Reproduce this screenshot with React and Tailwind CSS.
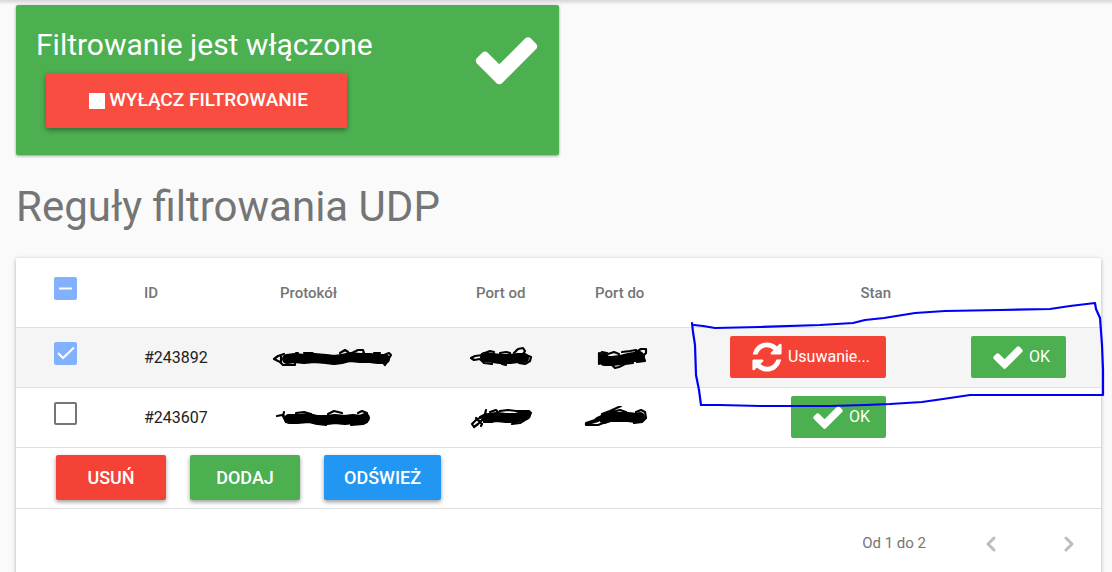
import React, { useState } from 'react';
import { clsx } from 'clsx';
import { ChevronLeft, ChevronRight } from 'lucide-react';

const CheckIcon = ({ className }) => (
  <svg viewBox="0 0 1792 1792" fill="currentColor" aria-hidden="true" className={className}>
    <path d="M1671 566q0 40-28 68l-724 724-136 136q-28 28-68 28t-68-28l-136-136-362-362q-28-28-28-68t28-68l136-136q28-28 68-28t68 28l294 295 656-657q28-28 68-28t68 28l136 136q28 28 28 68z" />
  </svg>
);

const RefreshIcon = ({ className }) => (
  <svg viewBox="0 0 1792 1792" fill="currentColor" aria-hidden="true" className={className}>
    <path d="M1639 1056q0 5-1 7-64 268-268 434.5t-478 166.5q-146 0-282.5-55t-243.5-157l-129 129q-19 19-45 19t-45-19-19-45v-448q0-26 19-45t45-19h448q26 0 45 19t19 45-19 45l-137 137q71 66 161 102t187 36q134 0 250-65t186-179q11-17 53-117 8-23 30-23h192q13 0 22.5 9.5t9.5 22.5zm25-800v448q0 26-19 45t-45 19h-448q-26 0-45-19t-19-45 19-45l138-138q-148-137-349-137-134 0-250 65t-186 179q-11 17-53 117-8 23-30 23h-199q-13 0-22.5-9.5t-9.5-22.5v-7q65-268 270-434.5t480-166.5q146 0 284 55.5t245 156.5l130-129q19-19 45-19t45 19 19 45z" />
  </svg>
);

// Pen strokes that hide the private values: thick = body, thin = loose ends
const Scribble = ({ viewBox, thick, thin, className }) => (
  <svg
    viewBox={viewBox}
    fill="none"
    stroke="#000"
    strokeLinecap="round"
    strokeLinejoin="round"
    aria-hidden="true"
    className={clsx('-ml-3 block h-6 max-w-none', className)}
  >
    <path d={thick} strokeWidth="10" />
    <path d={thin} strokeWidth="2.2" />
  </svg>
);

const Checkbox = ({ label, checked, indeterminate, onChange }) => (
  <label className="relative block h-[23px] w-[23px]">
    <input
      type="checkbox"
      aria-label={label}
      checked={checked}
      onChange={onChange}
      className="block h-full w-full appearance-none rounded-xs border-2 border-[#757575] checked:border-[#82b1ff] checked:bg-[#82b1ff]"
    />
    {checked && (
      <svg viewBox="0 0 23 23" fill="none" stroke="#fff" strokeWidth="2" className="pointer-events-none absolute inset-0">
        <path d={indeterminate ? 'M5 11.5h13' : 'M4 11l5 5L20 5.500'} />
      </svg>
    )}
  </label>
);

const Badge = ({ color, icon, children }) => (
  <span className={clsx('inline-flex h-[42px] items-center gap-1 rounded-xs pr-4 pl-5 align-middle text-base text-white', color)}>
    {icon}
    {children}
  </span>
);

const OkBadge = () => (
  <Badge color="bg-[#4caf50]" icon={<CheckIcon className="h-[34px] w-[34px]" />}>OK</Badge>
);

const ActionButton = ({ color, children }) => (
  <button
    type="button"
    className={clsx('h-[45px] min-w-[110px] rounded-xs px-5 text-lg font-medium text-white uppercase shadow-[0_2px_4px_rgba(0,0,0,0.4)]', color)}
  >
    {children}
  </button>
);

const RULES = [
  {
    id: 243892,
    removing: true,
    protocol: {
      viewBox: '268 346 128 24',
      thick: 'M287 359l8-1 9 1 10-1 12 1 8 1 8-1 8-2 10 1 10 0 8 1 7 0',
      thin: 'M284 354l-6 2-4 3 6 3 3 3h12v-2M281 356v6M296 353l2 0M304 353l8 0 4 2M340 353l5-3 3 2M350 354l8-4h5l1 3-6 3M384 355l5-2 2 2-3 5-3 5-3-4M374 353l6 0',
    },
    from: {
      viewBox: '464 346 76 24',
      thick: 'M485 357l8 1 7 1 10 0 8-1 6 0',
      thin: 'M483 355l-8 1-4 2 3 2 6-1 4 4 8 1M482 354l8-3 4 1M500 353l6-1 4 1M514 353l4-4 5-1 2 3-2 3M526 355l5 2-1 4-5 3-6-1M502 364l4 1',
    },
    to: {
      viewBox: '583 346 76 24',
      thick: 'M604 358v3l8 0 8-1 8-2 6-1 5-1 1 1',
      thin: 'M599 355l3-3 5 1M608 354l6-2 5 2M622 352l8-1 6-1M636 352l5-3h5v4l-3 3 2 5-8 1M611 364l4 4 4-1 6-3 8-1M599 353v11',
    },
  },
  {
    id: 243607,
    removing: false,
    protocol: {
      viewBox: '268 406 128 24',
      thick: 'M289 419l8 0 12-1 8 2 10 0 8-1 10 1 8-1 8 1 4-2',
      thin: 'M277 416l5-1 3 2M284 412l-1 4 3 6M296 413l8-1 7 2M328 414l6-3 8 2M358 413l4-2 5 2v9l-4 2-12 1M318 424l8 1',
    },
    from: {
      viewBox: '464 406 76 24',
      thick: 'M489 418l8-1 9 1 10 0 6-2 4-1',
      thin: 'M486 410l-2 8-6 6-4 3-2-3 5-5 6-2M476 418l6 6-1 2M486 414l-6 3M490 412l6-2 2 2M500 411l8-1 8 1 13 0 2 2-3 5-8 5-8 1M484 416v6l8 0',
    },
    to: {
      viewBox: '583 406 76 24',
      thick: 'M604 419l6-2 8 0 10 0 8 1 4-1',
      thin: 'M602 416l-5 2-2 2-9 3v2h12l8-3 4-2M588 424l10-3M590 423l10-3M594 422l8-4M602 414l8-3 11-5M612 412l8-2 6 2M636 412l5-2 4 2 1 6-4 4-8 1',
    },
  },
];

const App = () => {
  const [selected, setSelected] = useState([243892]);
  const [filtering, setFiltering] = useState(true);

  const toggle = (id) => {
    setSelected(prev => (prev.includes(id) ? prev.filter(x => x !== id) : [...prev, id]));
  };

  const toggleAll = () => {
    setSelected(prev => (prev.length ? [] : RULES.map(r => r.id)));
  };

  return (
    <div className="h-screen overflow-hidden bg-[#fafafa] pr-[11px] pl-4 font-[Roboto,'Liberation_Sans',sans-serif] text-[#212121]">
      <div className="-mr-[11px] -ml-4 h-[5px] bg-linear-to-b from-[#d6d6d6] to-[#fafafa]" />

      {/* Filter status */}
      <section className="flex h-[150px] w-1/2 items-start justify-between rounded-xs bg-[#4caf50] pr-[17px] pl-5 text-white shadow-[0_1px_3px_rgba(0,0,0,0.4)]">
        <div>
          <h2 className="mt-5 text-[30px] leading-10">
            {filtering ? 'Filtrowanie jest włączone' : 'Filtrowanie jest wyłączone'}
          </h2>
          <button
            type="button"
            onClick={() => setFiltering(prev => !prev)}
            className="mt-2 ml-[10px] flex h-[55px] w-[301px] items-center justify-center gap-1 rounded-xs bg-[#f84d40] pl-1 text-[19px] font-medium uppercase shadow-[0_2px_5px_rgba(0,0,0,0.4)]"
          >
            <span className="h-4 w-4 bg-white" />
            {filtering ? 'Wyłącz filtrowanie' : 'Włącz filtrowanie'}
          </button>
        </div>
        <CheckIcon className="mt-[19px] h-[71px] w-[71px]" />
      </section>

      <h1 className="mt-7 mb-[27px] text-[42px] leading-12 text-[#757575]">Reguły filtrowania UDP</h1>

      <main className="relative rounded-xs bg-white shadow-[0_1px_4px_rgba(0,0,0,0.3)]">
        <table className="w-full table-fixed text-left">
          <colgroup>
            <col className="w-[128px]" />
            <col className="w-[136px]" />
            <col className="w-[196px]" />
            <col className="w-[119px]" />
            <col className="w-[119px]" />
            <col className="w-[177px]" />
            <col />
          </colgroup>
          <thead>
            <tr className="h-[69px] border-b border-[#e0e0e0] text-[15px] text-[#757575] [&>th]:font-medium [&>th+th]:pt-0.5">
              <th className="pb-2 pl-[38px]">
                <Checkbox
                  label="Zaznacz wszystkie"
                  checked={selected.length > 0}
                  indeterminate={selected.length < RULES.length}
                  onChange={toggleAll}
                />
              </th>
              <th>ID</th>
              <th>Protokół</th>
              <th>Port od</th>
              <th>Port do</th>
              <th className="text-right">Stan</th>
              <th />
            </tr>
          </thead>
          <tbody>
            {RULES.map(rule => (
              <tr
                key={rule.id}
                className={clsx('h-[60px] border-b border-[#e0e0e0]', selected.includes(rule.id) && 'bg-[#f5f5f5]')}
              >
                <td className="pb-2 pl-[38px]">
                  <Checkbox
                    label={`Zaznacz #${rule.id}`}
                    checked={selected.includes(rule.id)}
                    onChange={() => toggle(rule.id)}
                  />
                </td>
                <td className="pt-0.5">#{rule.id}</td>
                <td className="pt-0.5"><Scribble {...rule.protocol} className="w-32" /></td>
                <td className="pt-0.5"><Scribble {...rule.from} className="w-[76px]" /></td>
                <td className="pt-0.5"><Scribble {...rule.to} className="w-[76px]" /></td>
                <td className="pr-[5px] text-right">
                  {rule.removing ? (
                    <Badge color="bg-[#f44336]" icon={<RefreshIcon className="h-[34px] w-[34px]" />}>Usuwanie...</Badge>
                  ) : (
                    <OkBadge />
                  )}
                </td>
                <td className="pr-[35px] text-right">{rule.removing && <OkBadge />}</td>
              </tr>
            ))}
          </tbody>
        </table>

        <div className="flex h-[61px] items-center gap-6 border-b border-[#e0e0e0] px-10">
          <ActionButton color="bg-[#f44336]">Usuń</ActionButton>
          <ActionButton color="bg-[#4caf50]">Dodaj</ActionButton>
          <ActionButton color="bg-[#2196f3]">Odśwież</ActionButton>
        </div>

        <nav aria-label="Strony" className="flex h-[70px] items-center justify-end pr-5 text-[15px] text-[#757575]">
          <span className="mr-[53px]">Od 1 do 2</span>
          <button type="button" aria-label="Poprzednia" className="mr-[54px] text-[#bdbdbd]">
            <ChevronLeft size={24} strokeWidth={3} />
          </button>
          <button type="button" aria-label="Następna" className="text-[#bdbdbd]">
            <ChevronRight size={24} strokeWidth={3} />
          </button>
        </nav>

        {/* Hand-drawn frame around the removed rule */}
        <svg
          viewBox="680 296 432 116"
          fill="none"
          stroke="#0000f5"
          strokeWidth="2.2"
          strokeLinecap="round"
          strokeLinejoin="round"
          aria-hidden="true"
          className="pointer-events-none absolute top-[38px] -right-[11px] h-[116px] w-[432px]"
        >
          <path d="M692 323L693 332L695 345L696 375L699 390L701 405L720 405L760 406L830 406L865 405L890 404L922 402L943 399L970 395L1103 395L1103 370L1102 345L1100 318L1096 309L1095 303L1070 306L1050 309L1000 310L945 311L915 313L884 318L865 320L853 323L820 325L760 327L715 328L703 326L694 325" />
        </svg>
      </main>
    </div>
  );
};

export default App;
